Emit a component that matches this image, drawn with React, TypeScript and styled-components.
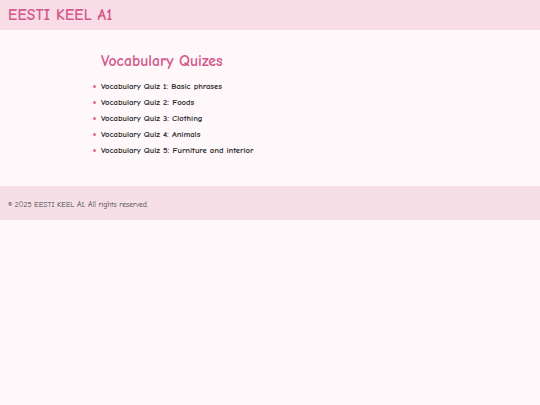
import React from "react"
import styled, { createGlobalStyle } from "styled-components"

const quizzes = [
  "Vocabulary Quiz 1: Basic phrases",
  "Vocabulary Quiz 2: Foods",
  "Vocabulary Quiz 3: Clothing",
  "Vocabulary Quiz 4: Animals",
  "Vocabulary Quiz 5: Furniture and interior",
]

const GlobalStyle = createGlobalStyle`
  html, body {
    margin: 0;
    padding: 0;
    background: #fef8fa;
    font-family: "Comic Sans MS", "Comic Neue", "DejaVu Sans", sans-serif;
    color: #333333;
  }
`

export default function App() {
  return (
    <>
      <GlobalStyle />
      <S.Header>
        <S.Logo>EESTI KEEL A1</S.Logo>
      </S.Header>
      <S.Main>
        <S.Title>Vocabulary Quizes</S.Title>
        <S.List>
          {quizzes.map((q) => (
            <S.Item key={q}>{q}</S.Item>
          ))}
        </S.List>
      </S.Main>
      <S.Footer>
        <S.Copy>© 2025 EESTI KEEL A1. All rights reserved.</S.Copy>
      </S.Footer>
    </>
  )
}

const S = {
  Header: styled.header`
    height: 30px;
    display: flex;
    align-items: center;
    padding: 0 8px;
    background-color: #f8dde6;
  `,
  Logo: styled.h1`
    margin: 0;
    font-size: 15.5px;
    font-weight: bold;
    letter-spacing: 0.2px;
    color: #d4588b;
  `,
  Main: styled.main`
    height: 156px;
    box-sizing: border-box;
    padding: 21px 0 0 101px;
  `,
  Title: styled.h2`
    margin: 0 0 7px;
    font-size: 15.7px;
    line-height: 20px;
    font-weight: bold;
    color: #d4588b;
  `,
  List: styled.ul`
    margin: 0;
    padding: 0;
    list-style: none;
  `,
  Item: styled.li`
    position: relative;
    height: 16px;
    line-height: 16px;
    font-size: 8.6px;
    font-weight: bold;
    color: #2a2a2a;

    &::before {
      content: "";
      position: absolute;
      left: -8px;
      top: 7px;
      width: 3px;
      height: 3px;
      border-radius: 50%;
      background: #e06a98;
    }
  `,
  Footer: styled.footer`
    height: 34px;
    display: flex;
    align-items: center;
    padding: 0 8px;
    background-color: #f6dfe6;
  `,
  Copy: styled.p`
    margin: 2px 0 0;
    font-size: 7.65px;
    color: #444444;
  `,
}
